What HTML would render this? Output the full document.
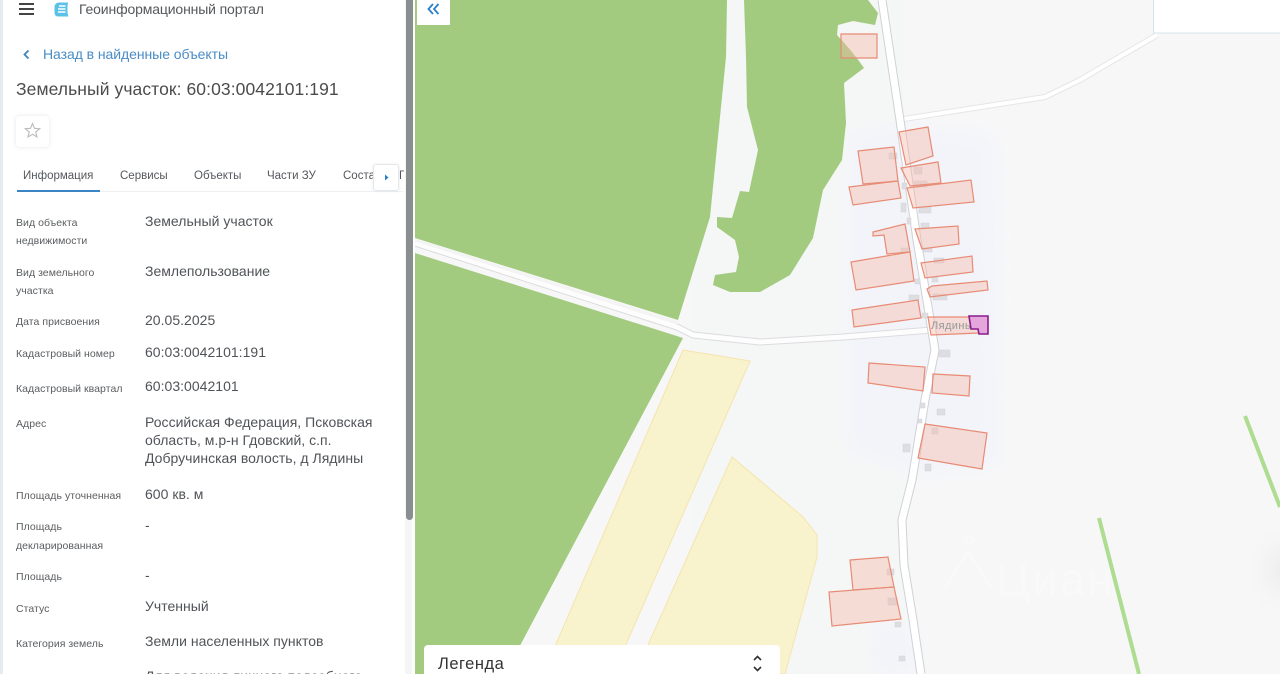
<!DOCTYPE html>
<html lang="ru">
<head>
<meta charset="utf-8">
<title>Геоинформационный портал</title>
<style>
html,body{margin:0;padding:0;width:1280px;height:674px;overflow:hidden;background:#f6f6f7;font-family:"Liberation Sans",sans-serif}
#map{position:absolute;left:0;top:0;width:1280px;height:674px}
#panel{position:absolute;left:0;top:0;width:415px;height:674px;background:#fff;overflow:hidden}
#panel .t{position:absolute;white-space:nowrap;line-height:18px}
.l{font-size:10.5px;color:#5a5d60;left:16px;letter-spacing:.04px}
.v{font-size:14px;color:#505357;left:145px;letter-spacing:.02px}
.tab{font-size:11.5px;color:#55585c}
</style>
</head>
<body>
<svg id="map" width="1280" height="674" viewBox="0 0 1280 674" xmlns="http://www.w3.org/2000/svg">
  <defs>
    <radialGradient id="sh"><stop offset="0" stop-color="#ececec"/><stop offset="1" stop-color="#f6f6f7" stop-opacity="0"/></radialGradient>
    <filter id="b6" x="-20%" y="-20%" width="140%" height="140%"><feGaussianBlur stdDeviation="8"/></filter>
    <filter id="s" x="-2%" y="-2%" width="104%" height="104%"><feGaussianBlur stdDeviation=".35"/></filter>
  </defs>
  <rect width="1280" height="674" fill="#f7f7f8"/>
  <g filter="url(#s)">
  <rect x="690" y="0" width="215" height="674" fill="#f5f6f6"/>
  <polygon points="905,125 995,135 1000,465 925,475 850,450 850,135" fill="#f3f4fa" filter="url(#b6)"/>
  <rect x="872" y="625" width="44" height="49" fill="#f3f4fa" filter="url(#b6)"/>
  <!-- greens -->
  <polygon points="415,0 727,0 726,57 710,217 678,320 415,238" fill="#a2cb7f"/>
  <polygon points="415,253 683,338 505,674 415,674" fill="#a2cb7f"/>
  <path d="M744,0 L746,57 L747,107 L758,150 L749,192 L740,191 L732,218 L717,217 L717,227 L735,240 L739,257 L736,272 L715,275 L713,285 L730,292 L760,292 L790,275 L813,238 L823,190 L842,160 L846,123 L844,83 L864,68 Q853,52 837,35 L838,25 L853,21 L875,25 L878,13 L868,0 Z" fill="#a2cb7f"/>
  <!-- yellows -->
  <polygon points="683,350 750,361 613,674 543,674" fill="#f8f3cc" stroke="#f5e4ae" stroke-width="1"/>
  <polygon points="732,457 803,517 817,535 817,557 785,674 635,674" fill="#f8f3cc" stroke="#f5e4ae" stroke-width="1"/>
  <!-- roads -->
  <g fill="none" stroke-linejoin="round">
    <polyline points="415,243 677,327 693,335 760,342 843,337 932,330" stroke="#dcdce0" stroke-width="7"/>
    <polyline points="415,243 677,327 693,335 760,342 843,337 932,330" stroke="#fdfdfd" stroke-width="5"/>
    <polyline points="415,240 677,323" stroke="#f4f4f5" stroke-width="3"/>
    <polyline points="904,119 1045,97 1080,80 1157,35" stroke="#e6e6e8" stroke-width="6"/>
    <polyline points="904,119 1045,97 1080,80 1157,35" stroke="#fff" stroke-width="4"/>
    <polyline points="882,0 900,120 917,240 922,270 935,350 925,400 912,480 902,520 904,565 913,620 921,674" stroke="#cfd1d4" stroke-width="9"/>
    <polyline points="882,0 900,120 917,240 922,270 935,350 925,400 912,480 902,520 904,565 913,620 921,674" stroke="#fff" stroke-width="7"/>
  </g>
  <!-- grey buildings -->
  <g fill="#dedee2" stroke="#d2d2d6" stroke-width=".5">
    <rect x="889" y="153" width="8" height="6"/><rect x="914" y="167" width="8" height="7"/><rect x="914" y="181" width="13" height="6"/>
    <rect x="902" y="183" width="5" height="6"/><rect x="901" y="203" width="5" height="9"/><rect x="919" y="207" width="12" height="6"/>
    <rect x="907" y="218" width="4" height="6"/><rect x="921" y="223" width="8" height="5"/><rect x="901" y="248" width="7" height="4"/>
    <rect x="923" y="248" width="9" height="4"/><rect x="934" y="258" width="10" height="5"/><rect x="915" y="279" width="5" height="5"/>
    <rect x="932" y="277" width="6" height="5"/><rect x="909" y="295" width="10" height="5"/><rect x="933" y="294" width="14" height="6"/>
    <rect x="922" y="313" width="6" height="5"/><rect x="939" y="350" width="11" height="7"/><rect x="920" y="403" width="5" height="5"/>
    <rect x="937" y="409" width="8" height="6"/><rect x="918" y="419" width="4" height="4"/><rect x="932" y="428" width="6" height="6"/>
    <rect x="903" y="444" width="7" height="8"/><rect x="925" y="464" width="6" height="7"/>
    <rect x="887" y="569" width="7" height="6"/><rect x="888" y="598" width="9" height="7"/><rect x="895" y="622" width="6" height="5"/><rect x="899" y="656" width="6" height="5"/>
  </g>
  <!-- parcels -->
  <g fill="#f6b8a8" fill-opacity=".42" stroke="#e78b74" stroke-width="1.2">
    <polygon points="841,34 877,34 877,58 841,58"/>
    <polygon points="899,132 928,127 933,156 906,165"/>
    <polygon points="858,151 894,147 898,181 863,184"/>
    <polygon points="849,187 898,181 901,198 853,205"/>
    <polygon points="901,168 938,162 941,183 910,186"/>
    <polygon points="907,188 971,180 974,202 913,208"/>
    <polygon points="873,232 905,224 910,252 887,254 884,235 873,236"/>
    <polygon points="915,229 958,226 959,244 922,249"/>
    <polygon points="851,262 910,252 914,281 856,290"/>
    <polygon points="921,263 972,256 973,272 925,278"/>
    <polygon points="927,289 932,286 987,281 988,290 930,297"/>
    <polygon points="852,310 918,300 921,318 854,327"/>
    <polygon points="928,317 975,317 979,333 931,335"/>
    <polygon points="869,363 925,367 923,391 868,383"/>
    <polygon points="933,374 970,376 969,396 932,393"/>
    <polygon points="925,424 987,433 982,469 918,458"/>
    <polygon points="850,560 888,557 894,587 853,590"/>
    <polygon points="829,592 894,587 901,619 832,626"/>
  </g>
  <text x="931" y="329" font-family="Liberation Sans, sans-serif" font-size="11" fill="#979797" letter-spacing=".4">Лядины</text>
  <polygon points="969,316 988,316 988,334 979,334 978,329 971,329" fill="#e5a6dc" stroke="#8a1f8c" stroke-width="1.6"/>
  <!-- field lines -->
  <g stroke="#aedc90" stroke-width="4" fill="none">
    <line x1="1099" y1="518" x2="1139" y2="674"/>
    <line x1="1245" y1="416" x2="1280" y2="507"/>
  </g>
  <ellipse cx="1283" cy="570" rx="40" ry="50" fill="url(#sh)"/>
  <!-- watermark -->
  <text x="996" y="595" font-family="Liberation Sans, sans-serif" font-size="46" fill="#f9f9fa" letter-spacing="2">Циан</text>
  <circle cx="969" cy="540" r="4" fill="none" stroke="#f9f9fa" stroke-width="2"/>
  <path d="M945 588 L968 552 L991 588" fill="none" stroke="#f9f9fa" stroke-width="3"/>
  </g>
  <!-- collapse button -->
  <rect x="417" y="-2" width="33" height="27" fill="#fff"/>
  <path d="M433 4 L428.500 9 L433 14 M438.500 4 L434 9 L438.500 14" fill="none" stroke="#2b7fc7" stroke-width="1.8"/>
  <!-- search box -->
  <rect x="1153.500" y="-2" width="130" height="35" fill="#fff" stroke="#d5e4ec"/>
  <!-- legend -->
  <path d="M424 674 V649 a4 4 0 0 1 4 -4 H776 a4 4 0 0 1 4 4 V674 Z" fill="#fff"/>
  <text x="438" y="669" font-family="Liberation Sans, sans-serif" font-size="16.500" fill="#333" letter-spacing=".5">Легенда</text>
  <path d="M754 660 L757.500 656.500 L761 660 M754 667 L757.500 670.500 L761 667" fill="none" stroke="#333" stroke-width="1.6"/>
</svg>

<div id="panel">
  <div style="position:absolute;left:0;top:0;width:3px;height:674px;background:#e6ebf2"></div>
  <div style="position:absolute;left:405px;top:0;width:7px;height:674px;background:#f4f6f6"></div>
  <div style="position:absolute;left:405.500px;top:0;width:7px;height:520px;background:#8a8e8e;border-radius:0 0 4px 4px"></div>

  <!-- header -->
  <div style="position:absolute;left:19px;top:3px;width:15px;height:2px;background:#444"></div>
  <div style="position:absolute;left:19px;top:8px;width:15px;height:2px;background:#444"></div>
  <div style="position:absolute;left:19px;top:13px;width:15px;height:2px;background:#444"></div>
  <svg style="position:absolute;left:53px;top:1px" width="17" height="17" viewBox="0 0 17 17">
    <path d="M6 1.500 H15 L14.500 5 V12 L15.500 15.500 H5 C2.500 15.500 1.500 13.500 1.500 11 V6 C1.500 3.500 3.500 1.500 6 1.500 Z" fill="#5cc1e6"/>
    <path d="M6 5 H12.500 M5 8 H12.500 M5 11 H12.500" stroke="#fff" stroke-width="1.400" fill="none"/>
  </svg>
  <div class="t" style="left:79px;top:0;font-size:14px;color:#55585c;letter-spacing:-.14px">Геоинформационный портал</div>

  <!-- back -->
  <svg style="position:absolute;left:22px;top:49px" width="9" height="11" viewBox="0 0 9 11"><path d="M6.500 1.500 L2.500 5.500 L6.500 9.500" fill="none" stroke="#3d85c0" stroke-width="1.800"/></svg>
  <div class="t" style="left:43px;top:45px;font-size:14px;color:#4a8cc4;letter-spacing:-.06px">Назад в найденные объекты</div>

  <!-- title -->
  <div class="t" style="left:16px;top:80px;font-size:17.500px;color:#4c4c4c;letter-spacing:.08px">Земельный участок: 60:03:0042101:191</div>

  <!-- star -->
  <div style="position:absolute;left:16px;top:116px;width:33px;height:31px;background:#fff;border-radius:3px;box-shadow:0 0 4px rgba(0,0,0,.1)"></div>
  <svg style="position:absolute;left:24px;top:122px" width="17" height="17" viewBox="0 0 17 17"><path d="M8.500 1.500 L10.500 6.300 L15.700 6.700 L11.700 10 L13 15 L8.500 12.300 L4 15 L5.300 10 L1.300 6.700 L6.500 6.300 Z" fill="none" stroke="#b9bbbd" stroke-width="1.100"/></svg>

  <!-- tabs -->
  <div class="t tab" style="left:23px;top:167px">Информация</div>
  <div class="t tab" style="left:120px;top:167px">Сервисы</div>
  <div class="t tab" style="left:194px;top:167px">Объекты</div>
  <div class="t tab" style="left:267px;top:167px">Части ЗУ</div>
  <div class="t tab" style="left:343px;top:167px">Состав</div>
  <div class="t tab" style="left:399px;top:167px;width:5px;overflow:hidden">Г</div>
  <div style="position:absolute;left:17px;top:191px;width:386px;height:1px;background:#eef0f2"></div>
  <div style="position:absolute;left:17px;top:189.500px;width:83px;height:2px;background:#3a86c4"></div>
  <div style="position:absolute;left:373px;top:164px;width:24px;height:25px;background:#fff;border:1px solid #e4e8ec;border-radius:3px;box-shadow:0 0 3px rgba(0,0,0,.08)"></div>
  <svg style="position:absolute;left:383px;top:173px" width="7" height="9" viewBox="0 0 7 9"><path d="M2 1.500 L5.500 4.500 L2 7.500 Z" fill="#2b7fc7"/></svg>

  <!-- rows -->
  <div class="t l" style="top:214px">Вид объекта</div>
  <div class="t l" style="top:232px">недвижимости</div>
  <div class="t v" style="top:212px">Земельный участок</div>

  <div class="t l" style="top:264px">Вид земельного</div>
  <div class="t l" style="top:282px">участка</div>
  <div class="t v" style="top:262px">Землепользование</div>

  <div class="t l" style="top:313px">Дата присвоения</div>
  <div class="t v" style="top:311px">20.05.2025</div>

  <div class="t l" style="top:345px">Кадастровый номер</div>
  <div class="t v" style="top:343px">60:03:0042101:191</div>

  <div class="t l" style="top:380px">Кадастровый квартал</div>
  <div class="t v" style="top:377px">60:03:0042101</div>

  <div class="t l" style="top:415px">Адрес</div>
  <div class="t v" style="top:413px">Российская Федерация, Псковская</div>
  <div class="t v" style="top:431px">область, м.р-н Гдовский, с.п.</div>
  <div class="t v" style="top:449px">Добручинская волость, д Лядины</div>

  <div class="t l" style="top:487px">Площадь уточненная</div>
  <div class="t v" style="top:485px">600 кв. м</div>

  <div class="t l" style="top:518px">Площадь</div>
  <div class="t l" style="top:537px">декларированная</div>
  <div class="t v" style="top:516px">-</div>

  <div class="t l" style="top:568px">Площадь</div>
  <div class="t v" style="top:566px">-</div>

  <div class="t l" style="top:600px">Статус</div>
  <div class="t v" style="top:597px">Учтенный</div>

  <div class="t l" style="top:635px">Категория земель</div>
  <div class="t v" style="top:632px">Земли населенных пунктов</div>

  <div class="t l" style="top:669px">Вид</div>
  <div class="t v" style="top:667px">Для ведения личного подсобного</div>
</div>
</body>
</html>
